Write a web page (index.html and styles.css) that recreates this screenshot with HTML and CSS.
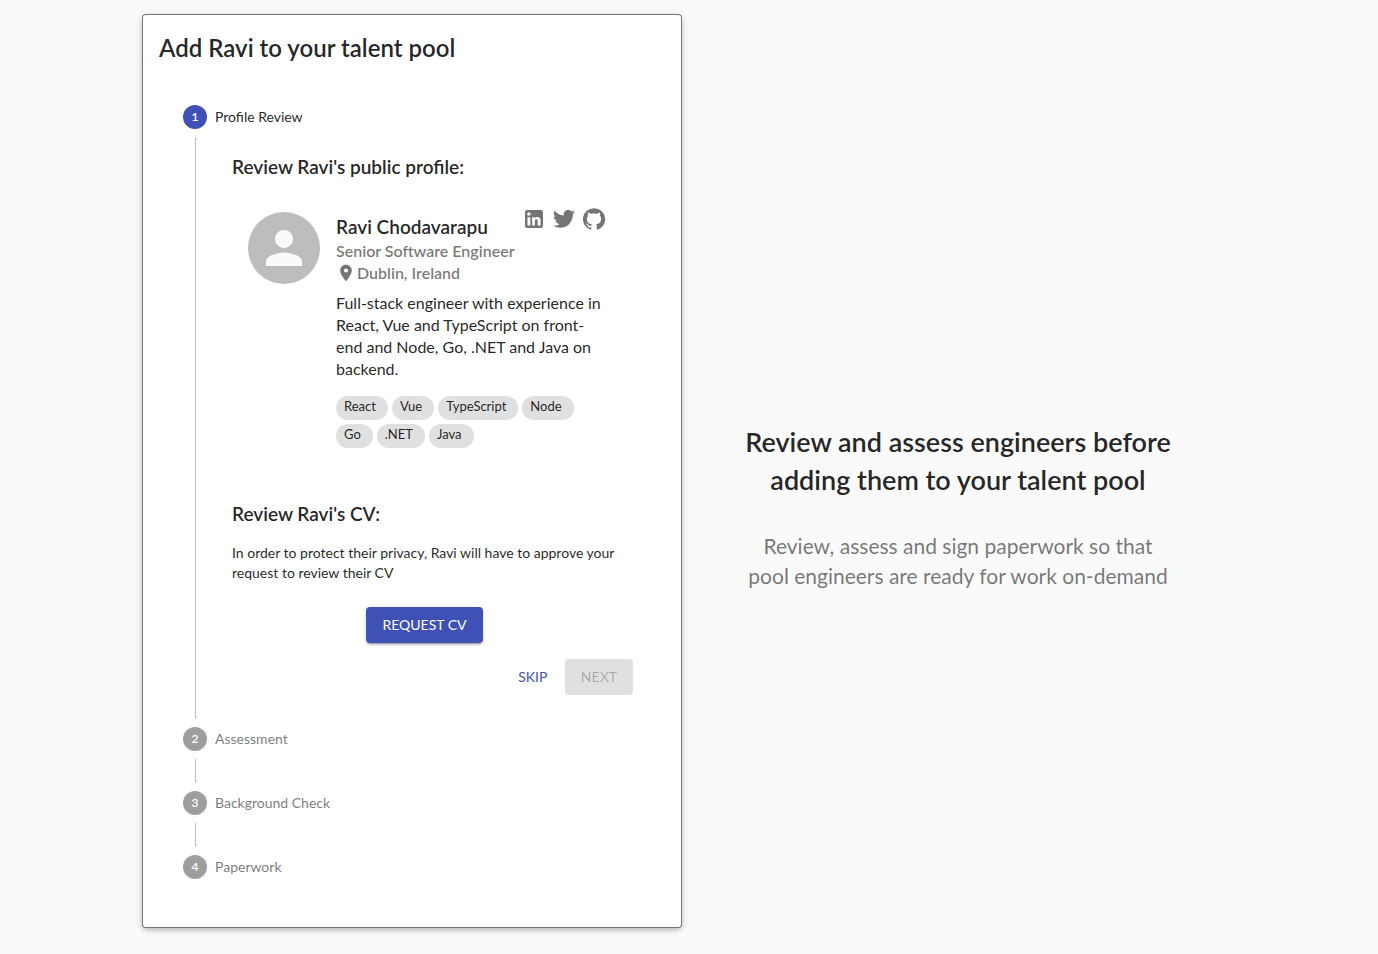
FILE: index.html
```html
<!DOCTYPE html>
<html lang="en">
<head>
<meta charset="utf-8">
<meta name="viewport" content="width=device-width, initial-scale=1">
<title>Add Ravi to your talent pool</title>
<link rel="stylesheet" href="styles.css">
</head>
<body>
<main class="page">
  <section class="card">
    <h1 class="card-title">Add Ravi to your talent pool</h1>
    <ol class="stepper">
      <li class="step">
        <div class="step-label active"><span class="step-number">1</span><span>Profile Review</span></div>
        <div class="step-content">
          <h2 class="section-title">Review Ravi's public profile:</h2>
          <article class="profile">
            <div class="avatar">
              <svg viewBox="0 0 24 24" aria-hidden="true"><path d="M12 12c2.21 0 4-1.79 4-4s-1.79-4-4-4-4 1.79-4 4 1.79 4 4 4zm0 2c-2.67 0-8 1.34-8 4v2h16v-2c0-2.66-5.33-4-8-4z"/></svg>
            </div>
            <div class="profile-body">
              <div class="profile-head">
                <div class="identity">
                  <h3 class="name">Ravi Chodavarapu</h3>
                  <p class="detail">Senior Software Engineer</p>
                  <p class="detail location"><svg viewBox="0 0 24 24" aria-hidden="true"><path d="M12 2C8.13 2 5 5.13 5 9c0 5.25 7 13 7 13s7-7.75 7-13c0-3.87-3.13-7-7-7zm0 9.5a2.5 2.5 0 010-5 2.5 2.5 0 010 5z"/></svg>Dublin, Ireland</p>
                </div>
                <nav class="social" aria-label="Social profiles">
                  <a href="#" aria-label="LinkedIn"><svg viewBox="0 0 24 24"><path d="M19 3a2 2 0 0 1 2 2v14a2 2 0 0 1-2 2H5a2 2 0 0 1-2-2V5a2 2 0 0 1 2-2h14m-.5 15.5v-5.3a3.26 3.26 0 0 0-3.26-3.26c-.85 0-1.84.52-2.32 1.3v-1.11h-2.79v8.37h2.79v-4.93c0-.77.62-1.4 1.39-1.4a1.4 1.4 0 0 1 1.4 1.4v4.93h2.79M6.88 8.56a1.68 1.68 0 0 0 1.68-1.68c0-.93-.75-1.69-1.68-1.69a1.69 1.69 0 0 0-1.69 1.69c0 .93.76 1.68 1.69 1.68m1.39 9.94v-8.37H5.5v8.37h2.77z"/></svg></a>
                  <a href="#" aria-label="Twitter"><svg viewBox="0 0 24 24"><path d="M23 5c-.8.36-1.68.6-2.6.7.94-.56 1.65-1.44 1.99-2.5-.88.53-1.85.9-2.88 1.1A4.52 4.52 0 0 0 11.8 8.4C8.05 8.2 4.72 6.42 2.49 3.7a4.5 4.5 0 0 0 1.4 6.04 4.5 4.5 0 0 1-2.05-.57v.06a4.52 4.52 0 0 0 3.63 4.44c-.66.18-1.36.2-2.04.08a4.53 4.53 0 0 0 4.22 3.14A9.08 9.08 0 0 1 1 18.76 12.8 12.8 0 0 0 7.93 20.8c8.32 0 12.87-6.9 12.87-12.88v-.59A9.2 9.2 0 0 0 23 5z"/></svg></a>
                  <a href="#" aria-label="GitHub"><svg viewBox="0 0 24 24"><path d="M12 1.27a11 11 0 00-3.48 21.46c.55.09.73-.28.73-.55v-1.84c-3.03.64-3.67-1.46-3.67-1.46-.55-1.29-1.28-1.65-1.28-1.65-.92-.65.1-.65.1-.65 1.1 0 1.73 1.1 1.73 1.1.92 1.65 2.57 1.2 3.21.92a2 2 0 01.64-1.47c-2.47-.27-5.04-1.19-5.04-5.5 0-1.1.46-2.1 1.2-2.84a3.76 3.76 0 010-2.93s.91-.28 3.11 1.1c1.8-.49 3.7-.49 5.5 0 2.1-1.38 3.02-1.1 3.02-1.1a3.76 3.76 0 01.1 2.93c.83.74 1.2 1.74 1.2 2.94 0 4.21-2.57 5.13-5.04 5.4.45.37.82.92.82 2.02v3.03c0 .27.1.64.73.55A11 11 0 0012 1.27"/></svg></a>
                </nav>
              </div>
              <p class="bio">Full-stack engineer with experience in React, Vue and TypeScript on front-end and Node, Go, .NET and Java on backend.</p>
              <ul class="chips">
                <li>React</li><li>Vue</li><li>TypeScript</li><li>Node</li><li>Go</li><li>.NET</li><li>Java</li>
              </ul>
            </div>
          </article>
          <h2 class="section-title">Review Ravi's CV:</h2>
          <p class="note">In order to protect their privacy, Ravi will have to approve your request to review their CV</p>
          <div class="request"><button type="button" class="button primary">REQUEST CV</button></div>
          <div class="actions">
            <button type="button" class="button text">SKIP</button>
            <button type="button" class="button" disabled>NEXT</button>
          </div>
        </div>
      </li>
      <li class="step"><div class="step-label"><span class="step-number">2</span><span>Assessment</span></div></li>
      <li class="step"><div class="step-label"><span class="step-number">3</span><span>Background Check</span></div></li>
      <li class="step"><div class="step-label"><span class="step-number">4</span><span>Paperwork</span></div></li>
    </ol>
  </section>
  <section class="pitch">
    <h2 class="pitch-title">Review and assess engineers before adding them to your talent pool</h2>
    <p class="pitch-text">Review, assess and sign paperwork so that pool engineers are ready for work on-demand</p>
  </section>
</main>
</body>
</html>
```

FILE: styles.css
```css
* {
  box-sizing: border-box;
}

body {
  margin: 0;
  background: #fafafa;
  color: rgba(0, 0, 0, 0.87);
  font-family: Lato, sans-serif;
  font-size: 14px;
  line-height: 20px;
}

h1, h2, h3, p, ol, ul {
  margin: 0;
  padding: 0;
}

ol, ul {
  list-style: none;
}

h1, h2, h3 {
  font-weight: 600;
}

svg {
  display: block;
  fill: currentColor;
}

.page {
  display: grid;
  grid-template-columns: minmax(0, 540fr) minmax(0, 554fr);
  max-width: 1126px;
  margin: 0 auto;
  padding: 14px 16px 24px;
}

.card {
  padding: 16px 16px 24px;
  border: 1px solid rgba(0, 0, 0, 0.54);
  border-radius: 4px;
  background: #fff;
  box-shadow: 0 3px 5px -1px rgba(0, 0, 0, 0.2), 0 1px 10px rgba(0, 0, 0, 0.12);
}

.card-title {
  font-size: 24px;
  line-height: 34px;
}

.stepper {
  padding: 40px 24px 24px;
}

.step {
  position: relative;
}

.step + .step {
  padding-top: 40px;
}

.step:nth-child(2) {
  padding-top: 8px;
}

.step:nth-child(n + 3)::before {
  content: "";
  position: absolute;
  top: 8px;
  left: 12px;
  height: 24px;
  border-left: 1px solid #bdbdbd;
}

.step-label {
  display: flex;
  align-items: center;
  gap: 8px;
  min-height: 24px;
  color: rgba(0, 0, 0, 0.54);
}

.step-label.active {
  color: rgba(0, 0, 0, 0.87);
}

.step-number {
  display: grid;
  place-items: center;
  width: 24px;
  height: 24px;
  border-radius: 50%;
  background: #9e9e9e;
  color: #fff;
  font-size: 12px;
  font-weight: 600;
}

.active .step-number {
  background: #3f51b5;
}

.step-content {
  margin: 8px 0 0 12px;
  padding: 18px 24px 24px 36px;
  border-left: 1px solid #bdbdbd;
}

.section-title {
  font-size: 19px;
  line-height: 24px;
}

.profile {
  display: flex;
  gap: 16px;
  padding: 28px 8px 54px 16px;
}

.avatar {
  display: grid;
  flex: none;
  place-items: center;
  width: 72px;
  height: 72px;
  margin-top: 5px;
  border-radius: 50%;
  background: #bdbdbd;
  color: #fafafa;
}

.avatar svg {
  width: 54px;
}

.profile-body {
  flex: 1;
  min-width: 0;
}

.profile-head {
  display: flex;
  justify-content: space-between;
}

.identity {
  padding-top: 8px;
  white-space: nowrap;
}

.name {
  padding-bottom: 1px;
  font-size: 19px;
  line-height: 24px;
}

.detail {
  color: rgba(0, 0, 0, 0.54);
  font-size: 16px;
  font-weight: 600;
  line-height: 22px;
}

.location {
  display: flex;
  align-items: center;
  gap: 1px;
}

.location svg {
  width: 20px;
}

.social {
  display: flex;
  align-self: flex-start;
  margin-left: -16px;
}

.social a {
  padding: 0 3px;
  color: rgba(0, 0, 0, 0.54);
}

.social svg {
  width: 24px;
}

.bio {
  padding: 8px 8px 16px 0;
  font-size: 16px;
  line-height: 22px;
}

.chips {
  display: flex;
  flex-wrap: wrap;
  gap: 4px;
}

.chips li {
  height: 24px;
  padding: 0 12px 0 8px;
  border-radius: 12px;
  background: #e0e0e0;
  font-size: 13px;
  line-height: 21px;
}

.note {
  padding: 17px 0 24px;
}

.request {
  text-align: center;
}

.button {
  min-width: 64px;
  padding: 8px 16px;
  border: 0;
  border-radius: 4px;
  background: #e0e0e0;
  color: rgba(0, 0, 0, 0.26);
  font: 400 14px/20px Lato, sans-serif;
}

.button.primary {
  background: #3f51b5;
  color: #fff;
  box-shadow: 0 3px 1px -2px rgba(0, 0, 0, 0.2), 0 2px 2px rgba(0, 0, 0, 0.14), 0 1px 5px rgba(0, 0, 0, 0.12);
}

.button.text {
  padding: 8px;
  background: none;
  color: #3f51b5;
}

.actions {
  display: flex;
  justify-content: flex-end;
  margin: 16px -16px 0 0;
}

.pitch {
  display: flex;
  flex-direction: column;
  align-items: center;
  justify-content: center;
  padding: 72px 2px 0 0;
  text-align: center;
}

.pitch-title {
  max-width: 440px;
  padding-bottom: 32px;
  font-size: 27px;
  line-height: 38px;
}

.pitch-text {
  max-width: 430px;
  color: rgba(0, 0, 0, 0.54);
  font-size: 21px;
  line-height: 30px;
}
```
